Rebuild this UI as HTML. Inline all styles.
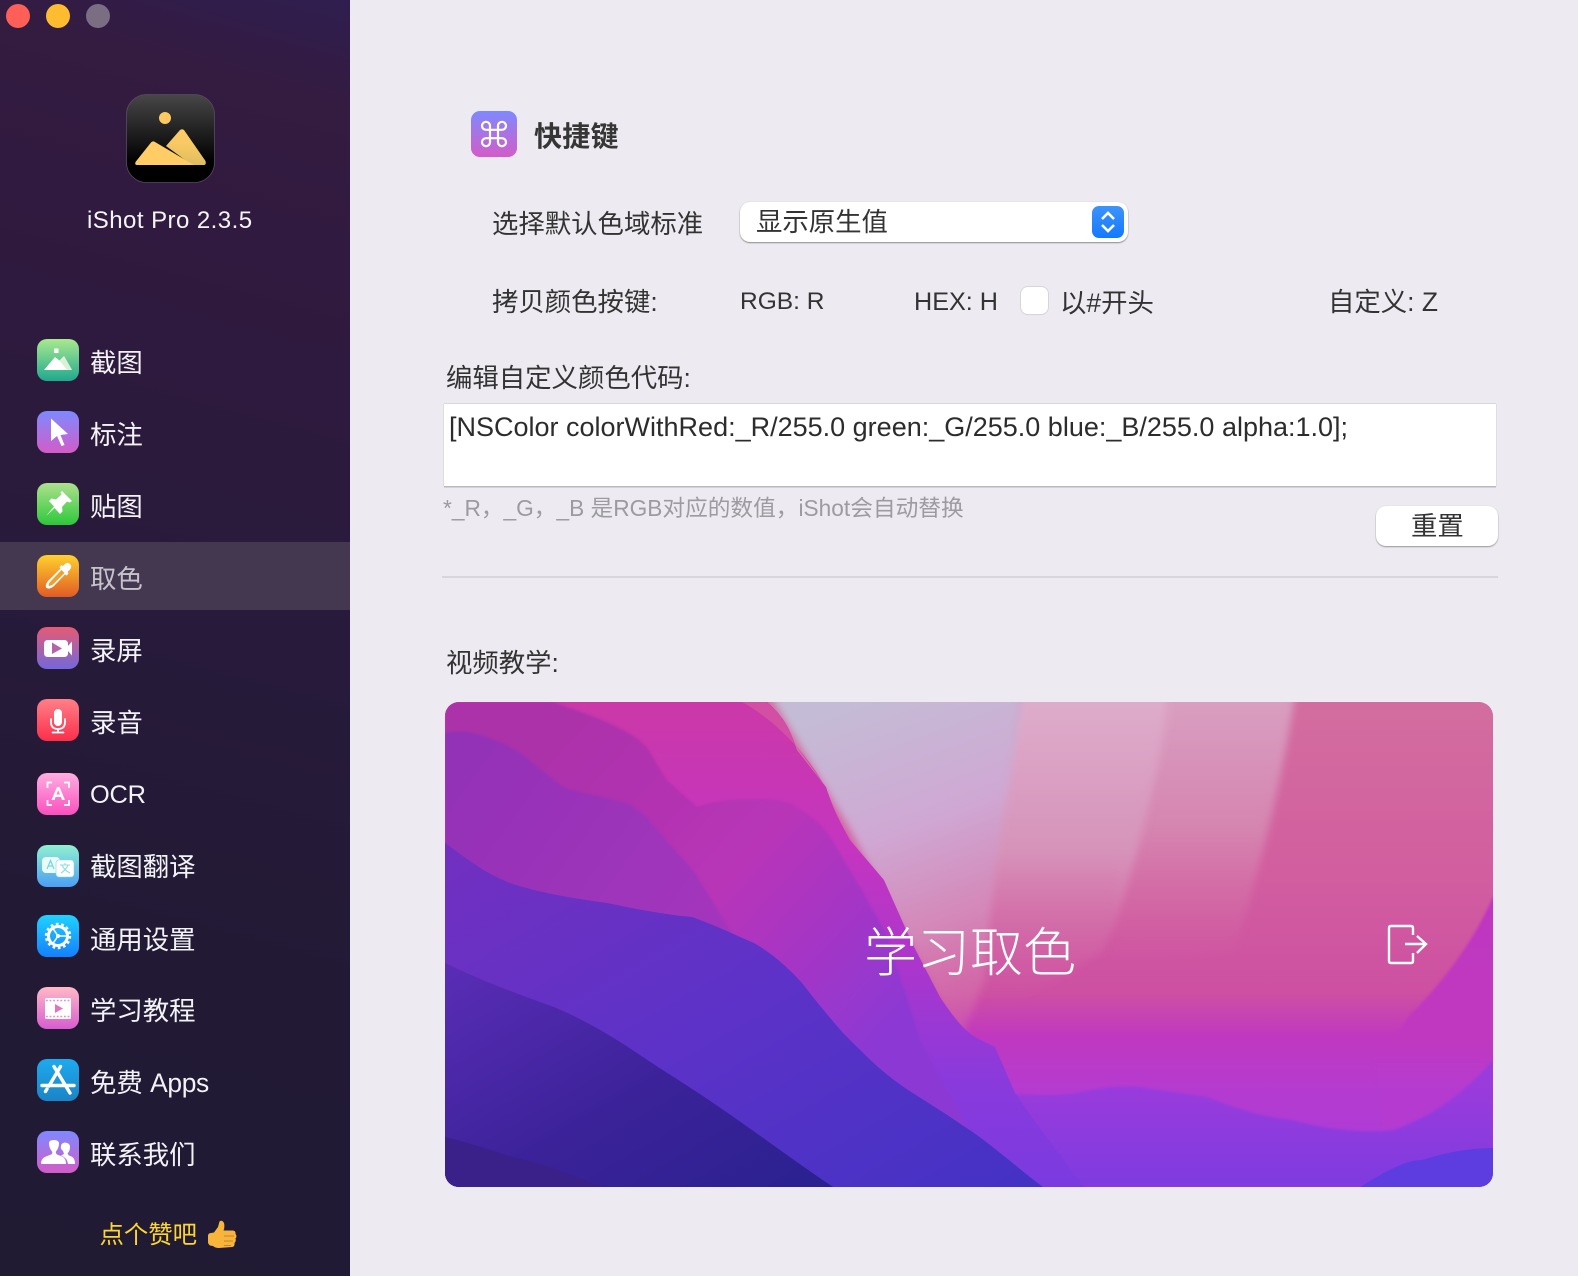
<!DOCTYPE html>
<html lang="zh"><head><meta charset="utf-8"><title>iShot Pro</title>
<style>
html,body{margin:0;padding:0;width:1578px;height:1276px;overflow:hidden;background:#edebf1}
body{position:relative;font-family:"Liberation Sans","Noto Sans CJK SC",sans-serif;color:#333}
.t{position:absolute;white-space:nowrap;line-height:36px;height:36px;font-size:26.4px}
.side{position:absolute;left:0;top:0;width:350px;height:1276px;background:linear-gradient(195deg,#2f1e50 0,#341b40 8%,#2e1a3e 28%,#271a3a 50%,#221a35 72%,#201a33 100%)}
.sel{position:absolute;left:0;top:542px;width:350px;height:68px;background:#443851}
.m{color:#f3f2f5;left:90px}
.ic{position:absolute;left:37px;width:42px;height:42px}
.dot{position:absolute;top:4px;width:24px;height:24px;border-radius:50%}
.box{position:absolute;background:#fff}
svg{display:block}
</style></head><body>
<div class="side"></div><div class="sel"></div>
<div class="dot" style="left:6px;background:#ff5f57"></div>
<div class="dot" style="left:46px;background:#febc2e"></div>
<div class="dot" style="left:86px;background:#7b6e82"></div>

<svg style="position:absolute;left:126px;top:94px" width="89" height="89" viewBox="126 94 89 89">
<defs><linearGradient id="ap" x1="0" y1="0" x2="0" y2="1"><stop offset="0" stop-color="#474747"/><stop offset=".75" stop-color="#020202"/><stop offset="1" stop-color="#000"/></linearGradient>
<linearGradient id="mt" gradientUnits="userSpaceOnUse" x1="182" y1="130" x2="178" y2="165"><stop offset="0" stop-color="#ffcc66"/><stop offset=".45" stop-color="#f6c863"/><stop offset="1" stop-color="#dcbb5e"/></linearGradient></defs>
<rect x="126.500" y="94.500" width="88" height="88" rx="20" fill="url(#ap)" stroke="#5a4a66" stroke-width=".8"/>
<circle cx="165" cy="118" r="6" fill="#ffc95f"/>
<path d="M166 146L180 130Q182 128.500 184 130L205.500 161Q206.500 165 204 165L192 165Z" fill="url(#mt)"/>
<path d="M135.500 162L151 142.500Q153 140.500 155 142L194 165L137 165Q134.500 165 135.500 162Z" fill="#ffcc66"/>
</svg>
<div class="t" style="left:87px;top:203px;font-size:24px;color:#f5f4f7;letter-spacing:.45px">iShot Pro 2.3.5</div>

<svg width="0" height="0" style="position:absolute"><defs>
<linearGradient id="g1" x1="0" y1="0" x2="0" y2="1"><stop offset="0" stop-color="#a9e98d"/><stop offset="1" stop-color="#1fa98f"/></linearGradient>
<linearGradient id="g2" x1="0" y1="0" x2="0" y2="1"><stop offset="0" stop-color="#7e89ff"/><stop offset="1" stop-color="#d45cc8"/></linearGradient>
<linearGradient id="g3" x1="0" y1="0" x2="0" y2="1"><stop offset="0" stop-color="#aee08e"/><stop offset="1" stop-color="#2cc93a"/></linearGradient>
<linearGradient id="g4" x1="0" y1="0" x2="0" y2="1"><stop offset="0" stop-color="#fed12e"/><stop offset="1" stop-color="#e25b24"/></linearGradient>
<linearGradient id="g5" x1="0" y1="0" x2="0" y2="1"><stop offset="0" stop-color="#e65a74"/><stop offset="1" stop-color="#7268dc"/></linearGradient>
<linearGradient id="g6" x1="0" y1="0" x2="0" y2="1"><stop offset="0" stop-color="#ff8088"/><stop offset="1" stop-color="#fc2e4b"/></linearGradient>
<linearGradient id="g7" x1="0" y1="0" x2="0" y2="1"><stop offset="0" stop-color="#ffaee2"/><stop offset="1" stop-color="#fb4fbe"/></linearGradient>
<linearGradient id="g8" x1="0" y1="0" x2="0" y2="1"><stop offset="0" stop-color="#90f0d0"/><stop offset="1" stop-color="#4b9ff5"/></linearGradient>
<linearGradient id="g9" x1="0" y1="0" x2="0" y2="1"><stop offset="0" stop-color="#20d2ff"/><stop offset="1" stop-color="#1480ff"/></linearGradient>
<linearGradient id="g10" x1="0" y1="0" x2="0" y2="1"><stop offset="0" stop-color="#ffb9c6"/><stop offset="1" stop-color="#d85cd0"/></linearGradient>
<linearGradient id="g11" x1="0" y1="0" x2="0" y2="1"><stop offset="0" stop-color="#1eaaee"/><stop offset="1" stop-color="#1a84c6"/></linearGradient>
</defs></svg>

<svg class="ic" style="top:339px" viewBox="0 0 42 42"><rect width="42" height="42" rx="10" fill="url(#g1)"/><rect x="17" y="9.500" width="4.500" height="4.500" fill="#fff"/><path d="M7 31L18 18L22.500 21.500L27 17L35 31Z" fill="#fff"/><path d="M22.500 21.500L27 17L35 31L30 31Z" fill="#dcefd9"/></svg>
<div class="t m" style="top:345px">截图</div>
<svg class="ic" style="top:411px" viewBox="0 0 42 42"><rect width="42" height="42" rx="10" fill="url(#g2)"/><path d="M14 7.500L31 23L23.500 24L27.500 34L24.500 35L20 25L14 30Z" fill="#fff"/></svg>
<div class="t m" style="top:417px">标注</div>
<svg class="ic" style="top:483px" viewBox="0 0 42 42"><rect width="42" height="42" rx="10" fill="url(#g3)"/><path d="M25 8L35 18L32.500 19.500L30 18.500L25 24L25.500 28.500L23 31L17.500 25L9 33L17 23.500L12 18L14.500 15.500L19 16.500L24.500 11.500L23.500 9.500Z" fill="#fff"/></svg>
<div class="t m" style="top:489px">贴图</div>
<svg class="ic" style="top:555px" viewBox="0 0 42 42"><rect width="42" height="42" rx="10" fill="url(#g4)"/><path d="M28 9Q30.500 6.500 33 9Q35.500 11.500 33 14.500L30.500 17L31.500 18.500L29.500 20.500L28 19.500L16.500 31.500Q13 34 11 33.500Q8 33 9 29.500Q10 26.500 13 24L23.500 13.500L22.500 12L24.500 10L26 11Z" fill="#fff"/><path d="M24.500 15L27.500 18L16 29.500Q13.500 31 12 31Q11 30 12.500 27.500Z" fill="#f0a02c"/></svg>
<div class="t m" style="top:561px;color:#c6c3ca">取色</div>
<svg class="ic" style="top:627px" viewBox="0 0 42 42"><rect width="42" height="42" rx="10" fill="url(#g5)"/><rect x="7" y="13" width="24" height="17" rx="3.500" fill="#fff"/><path d="M31 19L35 14.500V28.500L31 24Z" fill="#fff"/><path d="M15 15.500L25 21.500L15 27Z" fill="#b464ae"/></svg>
<div class="t m" style="top:633px">录屏</div>
<svg class="ic" style="top:699px" viewBox="0 0 42 42"><rect width="42" height="42" rx="10" fill="url(#g6)"/><rect x="17" y="10" width="8" height="17" rx="4" fill="#fff"/><path d="M14 20V23Q14 30 21 30Q28 30 28 23V20M21 30V33M15.500 33.500H26.500" fill="none" stroke="#fff" stroke-width="1.800" stroke-linecap="round"/></svg>
<div class="t m" style="top:705px">录音</div>
<svg class="ic" style="top:773px" viewBox="0 0 42 42"><rect width="42" height="42" rx="10" fill="url(#g7)"/><path d="M15 9.500H10.500V15M27 9.500H32V15M10.500 27V32H15M32 27V32H27" fill="none" stroke="#fff" stroke-width="1.800"/><path d="M14.500 27L20 14H22.500L28 27H25L24 24H18.500L17.500 27ZM19.500 21.500H23L21.200 17Z" fill="#fff" fill-rule="evenodd"/></svg>
<div class="t m" style="top:777px;font-size:25.400px;letter-spacing:-.2px">OCR</div>
<svg class="ic" style="top:845px" viewBox="0 0 42 42"><rect width="42" height="42" rx="10" fill="url(#g8)"/><rect x="5" y="12" width="18" height="16" rx="4" fill="#eafcf8"/><rect x="19" y="15" width="18" height="17" rx="3" fill="#fff" stroke="#7fd8e0" stroke-width=".6"/><path d="M10 24L13.500 15.500L17 24M11.200 21H15.800" fill="none" stroke="#7ad2e6" stroke-width="1.200"/><path d="M23 20H33M28 18V20M25 20Q27 25 33 28M31 20Q29 25 24 28" fill="none" stroke="#8fdbe6" stroke-width="1.100"/></svg>
<div class="t m" style="top:849px">截图翻译</div>
<svg class="ic" style="top:915px" viewBox="0 0 42 42"><rect width="42" height="42" rx="10" fill="url(#g9)"/><circle cx="21" cy="21" r="9.500" fill="none" stroke="#fff" stroke-width="3"/><circle cx="21" cy="21" r="12" fill="none" stroke="#fff" stroke-width="2.400" stroke-dasharray="2.700 2.700"/><circle cx="21" cy="21" r="2" fill="#fff"/><path d="M21 21H30M21 21L16 13.500M21 21L16 28.500" stroke="#fff" stroke-width="1.500" fill="none"/></svg>
<div class="t m" style="top:921.500px">通用设置</div>
<svg class="ic" style="top:987px" viewBox="0 0 42 42"><rect width="42" height="42" rx="10" fill="url(#g10)"/><rect x="8" y="11" width="26" height="21" rx="1.500" fill="#fff"/><path d="M9 13.500H33M9 29.500H33" stroke="#e98ccb" stroke-width="1.600" stroke-dasharray="1.800 1.800"/><path d="M18 17L26 21.500L18 26Z" fill="#e272c6"/></svg>
<div class="t m" style="top:993px">学习教程</div>
<svg class="ic" style="top:1059px" viewBox="0 0 42 42"><rect width="42" height="42" rx="10" fill="url(#g11)"/><path d="M23.500 7.500L12 27M17 7.500L33 34M5 26.500H37" stroke="#fff" stroke-width="3.400" stroke-linecap="round" fill="none"/><path d="M8.500 32.500L10 30" stroke="#fff" stroke-width="3.400" stroke-linecap="round"/></svg>
<div class="t m" style="top:1065px">免费 <span style="letter-spacing:-.35px">Apps</span></div>
<svg class="ic" style="top:1131px" viewBox="0 0 42 42"><rect width="42" height="42" rx="10" fill="url(#g2)"/><path d="M4 33Q4 27 9 25.500L14 23.500Q16 22.500 15 20.500Q12 17 12 12Q12 9 17 9Q21.500 9 22 12Q22 17 19 20.500Q18.500 22.500 20 23.500L25 25.500Q29 27 29 33Z" fill="#fff"/><path d="M24 24.500L27 23Q26 19 24 18Q23 12 28 11.500Q33 12 33 16Q33 20 30.500 22.500Q31 24 33 25Q38 26 38 33H31Q30.500 27 24 24.500Z" fill="#fff"/></svg>
<div class="t m" style="top:1137px">联系我们</div>

<div class="t" style="left:99.500px;top:1218px;font-size:24.400px;color:#fcd62f">点个赞吧</div>
<svg style="position:absolute;left:207px;top:1220px" width="31" height="31" viewBox="0 0 31 31"><path d="M1 16Q1 13 4 13L7 12.500L11 7L12.500 1.500Q15 -.5 17 3Q18 7 16.500 10.500L26 10.500Q29 11 28.500 14Q30.500 16 28.500 18.500Q29.500 21 27.500 23Q28 26.500 25 27L12 28Q8 28 6 26L3 25.500Q1 24 1 22Z" fill="#f7b53c"/><path d="M17 16H27M17 21H26M17 25.500H24" stroke="#c9842a" stroke-width="1"/></svg>

<!-- main -->
<svg style="position:absolute;left:471px;top:111px" width="46" height="46" viewBox="0 0 46 46"><rect width="46" height="46" rx="9" fill="url(#g2)"/><path d="M19 19V14.500A4 4 0 1 0 15 18.800H31A4 4 0 1 0 27 14.500V31.500A4 4 0 1 0 31 27.200H15A4 4 0 1 0 19 31.500Z" fill="none" stroke="#fff" stroke-width="2.200"/></svg>
<div class="t" style="left:534px;top:119px;font-size:28px;font-weight:700;color:#363636;letter-spacing:.3px">快捷键</div>

<div class="t" style="left:492px;top:206px">选择默认色域标准</div>
<div class="box" style="left:740px;top:202px;width:388px;height:40px;border-radius:10px;box-shadow:0 1px 1.500px rgba(0,0,0,.4),0 0 1px rgba(0,0,0,.15)"></div>
<div class="t" style="left:756px;top:204px">显示原生值</div>
<svg style="position:absolute;left:1092px;top:206px" width="32" height="32" viewBox="0 0 32 32"><defs><linearGradient id="bl" x1="0" y1="0" x2="0" y2="1"><stop offset="0" stop-color="#3c94fb"/><stop offset="1" stop-color="#1479fe"/></linearGradient></defs><rect width="32" height="32" rx="7" fill="url(#bl)"/><path d="M10 13L16 7L22 13M10 19L16 25L22 19" fill="none" stroke="#fff" stroke-width="2.600"/></svg>

<div class="t" style="left:492px;top:284px">拷贝颜色按键:</div>
<div class="t" style="left:740px;top:284px;font-size:24.500px">RGB: R</div>
<div class="t" style="left:914px;top:284px;font-size:25.200px">HEX: H</div>
<div class="box" style="left:1020.500px;top:287px;width:27px;height:27px;border-radius:7px;box-shadow:0 0 0 1px #d6d5da,0 1px 1px rgba(0,0,0,.1)"></div>
<div class="t" style="left:1060px;top:285px">以#开头</div>
<div class="t" style="left:1328px;top:284px">自定义: Z</div>

<div class="t" style="left:446px;top:359.500px">编辑自定义颜色代码:</div>
<div class="box" style="left:444px;top:404px;width:1052px;height:82px;box-shadow:0 -1px 0 #d8d7dc,0 1.500px 0 #b9b8bd,1px 0 0 #dedde2,-1px 0 0 #dedde2"></div>
<div class="t" style="left:449px;top:409px;font-size:27px;color:#2c2c2c">[NSColor colorWithRed:_R/255.0 green:_G/255.0 blue:_B/255.0 alpha:1.0];</div>
<div class="t" style="left:443px;top:490px;font-size:22.700px;color:#9c9ba0">*_R，_G，_B 是RGB对应的数值，iShot会自动替换</div>
<div class="box" style="left:1376px;top:506px;width:122px;height:40px;border-radius:10px;box-shadow:0 1px 1.500px rgba(0,0,0,.35),0 0 1px rgba(0,0,0,.15)"></div>
<div class="t" style="left:1411px;top:508px">重置</div>
<div style="position:absolute;left:442px;top:576px;width:1056px;height:2px;background:#d7d6da"></div>
<div class="t" style="left:446px;top:645px">视频教学:</div>

<svg style="position:absolute;left:445px;top:702px" width="1048" height="485" viewBox="445 702 1048 485">
<defs>
<clipPath id="cc"><rect x="445" y="702" width="1048" height="485" rx="14"/></clipPath>
<linearGradient id="bg" gradientUnits="userSpaceOnUse" x1="0" y1="702" x2="0" y2="1187"><stop offset="0" stop-color="#d36d9f"/><stop offset=".35" stop-color="#d25e9f"/><stop offset=".6" stop-color="#cd50a2"/><stop offset=".69" stop-color="#c038c0"/><stop offset=".8" stop-color="#b53bd0"/><stop offset="1" stop-color="#a83cdc"/></linearGradient>
<linearGradient id="lav" gradientUnits="userSpaceOnUse" x1="840" y1="702" x2="960" y2="1030"><stop offset="0" stop-color="#c4bcd6"/><stop offset=".4" stop-color="#cfa8d3"/><stop offset=".7" stop-color="#d487b8"/><stop offset="1" stop-color="#d66ba6" stop-opacity=".4"/></linearGradient>
<linearGradient id="rose" gradientUnits="userSpaceOnUse" x1="0" y1="702" x2="0" y2="1000"><stop offset="0" stop-color="#deaccb"/><stop offset=".5" stop-color="#d693ba"/><stop offset="1" stop-color="#d46ba5" stop-opacity="0"/></linearGradient>
<linearGradient id="rose2" gradientUnits="userSpaceOnUse" x1="0" y1="702" x2="0" y2="960"><stop offset="0" stop-color="#d99ec0"/><stop offset=".5" stop-color="#d584b0"/><stop offset="1" stop-color="#d46ba5" stop-opacity="0"/></linearGradient>
<linearGradient id="rr" gradientUnits="userSpaceOnUse" x1="0" y1="897" x2="0" y2="1090"><stop offset="0" stop-color="#bf36c0"/><stop offset=".74" stop-color="#c038c0"/><stop offset="1" stop-color="#b53bd0"/></linearGradient>
<linearGradient id="front" gradientUnits="userSpaceOnUse" x1="0" y1="702" x2="0" y2="1187"><stop offset="0" stop-color="#cb38a8"/><stop offset=".3" stop-color="#c535c0"/><stop offset=".57" stop-color="#a836ce"/><stop offset=".78" stop-color="#8a3adc"/><stop offset="1" stop-color="#7a3ae0"/></linearGradient>
<linearGradient id="cc2" gradientUnits="userSpaceOnUse" x1="560" y1="740" x2="880" y2="1040"><stop offset="0" stop-color="#ac30aa"/><stop offset=".5" stop-color="#b835b8"/><stop offset=".75" stop-color="#a436c6"/><stop offset="1" stop-color="#8c38d4"/></linearGradient>
<linearGradient id="low" gradientUnits="userSpaceOnUse" x1="0" y1="1087" x2="0" y2="1187"><stop offset="0" stop-color="#9a3bdc"/><stop offset="1" stop-color="#7e3be0"/></linearGradient>
<linearGradient id="ce" x1="0" y1="0" x2="1" y2="1"><stop offset="0" stop-color="#7230c0"/><stop offset=".5" stop-color="#5c32c8"/><stop offset="1" stop-color="#4332c4"/></linearGradient>
<linearGradient id="cf" x1="0" y1="0" x2="1" y2="1"><stop offset="0" stop-color="#5a2db6"/><stop offset=".55" stop-color="#3b2299"/><stop offset="1" stop-color="#2a2190"/></linearGradient>
<linearGradient id="cd" x1="0" y1="0" x2="1" y2=".6"><stop offset="0" stop-color="#9232b6"/><stop offset="1" stop-color="#a435bc"/></linearGradient>
<filter id="b3" x="-30%" y="-30%" width="160%" height="160%"><feGaussianBlur stdDeviation="4"/></filter>
<filter id="b2" x="-20%" y="-20%" width="140%" height="140%"><feGaussianBlur stdDeviation="1.200"/></filter>
</defs>
<g clip-path="url(#cc)">
<rect x="445" y="702" width="1048" height="485" fill="url(#bg)"/>
<path d="M1170 690H1296C1280 790 1262 860 1235 950Q1180 960 1110 960L1120 850Z" fill="url(#rose2)" filter="url(#b3)"/>
<path d="M1020 690H1172C1160 760 1140 860 1105 950Q1040 990 985 1020Q970 900 985 840Z" fill="url(#rose)" filter="url(#b3)"/>
<path d="M767 690H1024C1010 790 990 880 985 980L960 1040L850 830Z" fill="url(#lav)" filter="url(#b3)"/>
<path d="M1493 897C1472 945 1440 985 1408 1017C1395 1040 1385 1050 1373 1060L1385 1130L1500 1090V897Z" fill="url(#rr)" filter="url(#b2)"/>
<path d="M1000 1093Q1050 1097 1077 1093Q1110 1085 1139 1087L1208 1097Q1250 1115 1291 1120Q1350 1135 1394 1130Q1450 1110 1493 1060V1187H1040L1010 1130Z" fill="url(#low)" filter="url(#b2)"/>
<path d="M1360 1187C1385 1172 1405 1160 1422 1160Q1460 1148 1493 1148V1187Z" fill="#5d3ce0"/>
<path d="M445 702H767C780 714 788 722 797 750L826 787C835 815 845 830 850 840L884 880L912 943L940 997C955 1020 968 1035 981 1040L995 1047L1015 1093L1036 1123L1084 1187H445Z" fill="url(#front)"/>
<path d="M742 702H766C778 712 788 722 795 745L823 783C805 752 775 720 742 702Z" fill="#d34fa3"/>
<path d="M445 702H553C580 712 625 725 647 747C655 760 660 770 667 780L697 807C715 800 760 795 790 803C810 815 825 825 835 845L862 890L887 935L920 1040L1000 1187H445Z" fill="url(#cc2)" filter="url(#b2)"/>
<path d="M445 733C455 731 465 731 473 733C495 738 520 750 533 763L563 787C585 794 605 797 627 803C640 810 650 820 657 830L693 870L730 930L760 1000H445Z" fill="url(#cd)" filter="url(#b2)"/>
<path d="M445 843C455 850 465 858 473 863C490 875 505 882 523 887C550 895 580 899 607 903C640 910 670 915 692 917C715 925 735 935 754 943C775 955 790 970 802 983C815 1000 830 1018 843 1033C855 1045 868 1058 878 1067C893 1080 905 1088 919 1097C940 1110 958 1122 974 1133C998 1150 1020 1170 1043 1187H445Z" fill="url(#ce)"/>
<path d="M445 963C480 980 520 995 554 1007C585 1020 615 1038 637 1053C665 1072 695 1090 719 1107C760 1135 800 1165 833 1187H445Z" fill="url(#cf)"/>
<path d="M445 1137C470 1143 490 1150 513 1157C545 1165 575 1175 602 1187H445Z" fill="#3a2089"/>
</g>
<path d="M1413 935V928Q1413 926 1411 926H1391Q1389 926 1389 928V961Q1389 963 1391 963H1411Q1413 963 1413 961V953" fill="none" stroke="#fff" stroke-width="2.400"/>
<path d="M1405 944H1426M1417 936L1426 944L1417 953" fill="none" stroke="#fff" stroke-width="2.400"/>
</svg>
<div class="t" style="left:864px;top:924px;font-size:53px;line-height:60px;height:60px;color:#fff;font-weight:200">学习取色</div>
</body></html>
